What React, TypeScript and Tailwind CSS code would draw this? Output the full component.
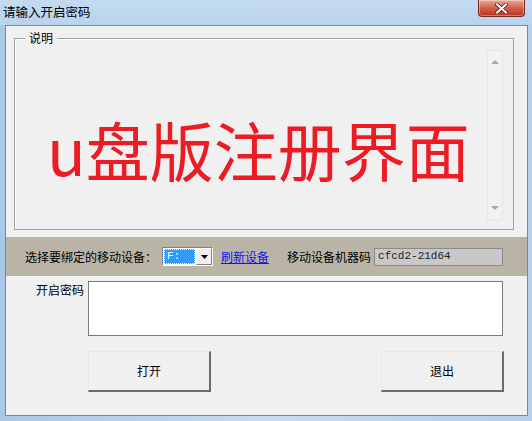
import React from "react";

const cjk = { fontFamily: '"Noto Sans CJK SC", "Noto Sans", sans-serif' };

function CloseButton() {
  return (
    <div className="ml-auto mr-[7px] self-start w-[47px] h-[17px] rounded-b-[4px] border border-t-0 border-[#7a2a20] bg-gradient-to-b from-[#e9a99a] via-[#d0604a] to-[#b8321c] flex items-center justify-center shadow-[inset_0_0_0_1px_rgba(255,255,255,0.35)]">
      <svg width="13" height="11" viewBox="0 0 13 11">
        <path d="M2 1.5 L11 9.5 M11 1.5 L2 9.5" stroke="#5a1a12" strokeWidth="3.6" strokeLinecap="square" />
        <path d="M2 1.5 L11 9.5 M11 1.5 L2 9.5" stroke="#ffffff" strokeWidth="2" strokeLinecap="square" />
      </svg>
    </div>
  );
}

function ScrollBar() {
  return (
    <div className="w-[16px] mt-[11px] mb-[9px] mr-[10px] border border-[#e6e6e6] bg-[#f2f2f2] flex flex-col justify-between items-center py-[8px]">
      <svg width="8" height="5" viewBox="0 0 8 5">
        <path d="M0 5 L4 1 L8 5 Z" fill="#a8a8a8" />
      </svg>
      <svg width="8" height="5" viewBox="0 0 8 5">
        <path d="M0 0 L4 4 L8 0 Z" fill="#a8a8a8" />
      </svg>
    </div>
  );
}

function DriveSelect() {
  return (
    <div className="ml-[5px] w-[51px] h-[19px] border-t border-l border-[#808080] border-r border-b border-r-white border-b-white flex bg-white">
      <div className="flex-1 m-[1px] bg-[#3399ff] border border-dotted border-[#ffffff] flex items-center pl-[2px]">
        <span className="text-[11px] leading-none text-white" style={{ fontFamily: '"Liberation Mono", monospace' }}>F:</span>
      </div>
      <div className="w-[16px] bg-[#f0f0f0] border-l border-t border-white border-r border-b border-r-[#808080] border-b-[#808080] flex items-center justify-center">
        <svg width="7" height="4" viewBox="0 0 7 4">
          <path d="M0 0 L7 0 L3.5 4 Z" fill="#000" />
        </svg>
      </div>
    </div>
  );
}

function WinButton({ label, className }: { label: string; className?: string }) {
  return (
    <button
      type="button"
      className={`w-[123px] h-[41px] bg-[#f0f0f0] border-t border-l border-[#e8e8e8] border-r-2 border-b-2 border-r-[#6b6b6b] border-b-[#6b6b6b] text-[12px] text-black ${className ?? ""}`}
      style={cjk}
    >
      {label}
    </button>
  );
}

export default function App() {
  return (
    <div className="w-[532px] h-[421px] flex flex-col bg-gradient-to-r from-[#a9c8e8] via-[#c6dcf1] to-[#b5d0ec]" style={cjk}>
      <div className="h-[25px] flex items-center pl-[3px] bg-gradient-to-b from-[#c3daf1] to-[#b9d3ee]">
        <span className="text-[12.5px] text-black leading-none">请输入开启密码</span>
        <CloseButton />
      </div>

      <div className="ml-[5px] mr-[4px] mb-[5px] flex-1 border border-[#7c8794] bg-[#f0f0f0] flex flex-col">
        <div className="mt-[12px] ml-[8px] w-[500px] h-[192px] border border-[#a0a0a0] shadow-[inset_1px_1px_0_#ffffff] relative flex">
          <span className="absolute -top-[9px] left-[10px] px-[4px] bg-[#f0f0f0] text-[12px] leading-[16px] text-black">说明</span>
          <div className="flex-1 pt-[77px] pl-[32px]">
            <span className="text-[64px] leading-none text-[#ed1c24]">u盘版注册界面</span>
          </div>
          <ScrollBar />
        </div>

        <div className="mt-[7px] h-[39px] bg-[#bab4a7] flex items-center pl-[19px] text-[12px] text-black">
          <span>选择要绑定的移动设备：</span>
          <DriveSelect />
          <a className="ml-[8px] text-[#1010f0] underline">刷新设备</a>
          <span className="ml-[18px]">移动设备机器码</span>
          <div className="ml-[3px] w-[129px] h-[18px] bg-[#c8c8c8] border border-[#8a8a8a] flex items-center pl-[3px]">
            <span className="text-[11px] leading-none text-[#222]" style={{ fontFamily: '"Liberation Mono", monospace' }}>cfcd2-21d64</span>
          </div>
        </div>

        <div className="mt-[5px] flex">
          <span className="ml-[30px] mt-[1px] text-[12px] leading-[16px] text-black w-[48px]">开启密码</span>
          <div className="ml-[4px] w-[415px] h-[55px] bg-white border border-[#7a7a7a]" />
        </div>

        <div className="mt-[15px] flex">
          <WinButton label="打开" className="ml-[82px]" />
          <WinButton label="退出" className="ml-[170px]" />
        </div>
      </div>
    </div>
  );
}
